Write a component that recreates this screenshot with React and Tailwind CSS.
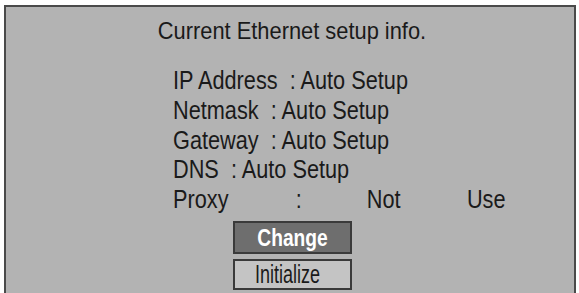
export default function App() {
  const font = { fontFamily: '"Liberation Sans", Arial, sans-serif' };
  return (
    <div className="w-[579px] h-[293px] bg-white pt-[5px] pl-[4px] pr-[3px] overflow-hidden" style={font}>
      <div className="h-[300px] bg-[#b3b3b3] border-2 border-[#4a4a4a] text-[#1a1a1a] flex flex-col">
        <div className="text-[24px] leading-[30px] text-center mt-[9px] scale-x-[0.91] origin-center translate-x-[2px]">Current Ethernet setup info.</div>
        <div className="pl-[167px] mt-[20px] text-[26px] leading-[29.75px]">
          <div className="scale-x-[0.835] origin-left whitespace-nowrap">
            <div>IP Address&nbsp; : Auto Setup</div>
            <div>Netmask&nbsp; : Auto Setup</div>
            <div>Gateway&nbsp; : Auto Setup</div>
            <div>DNS&nbsp; : Auto Setup</div>
            <div className="flex">
              <span className="w-[147px]">Proxy</span>
              <span className="w-[85px]">:</span>
              <span className="w-[120px]">Not</span>
              <span>Use</span>
            </div>
          </div>
        </div>
        <div className="flex flex-col items-center mt-[6px] gap-[5px] pl-[5px]">
          <div className="w-[119px] h-[33px] bg-[#6e6e6e] border-2 border-[#3a3a3a] text-white font-bold text-[24px] leading-[29px] text-center"><div className="scale-x-[0.8]">Change</div></div>
          <div className="w-[119px] h-[31px] bg-[#c4c4c4] border-2 border-[#3a3a3a] text-[25px] leading-[27px] text-center"><div className="scale-x-[0.72] -translate-x-[5px]">Initialize</div></div>
        </div>
      </div>
    </div>
  );
}
